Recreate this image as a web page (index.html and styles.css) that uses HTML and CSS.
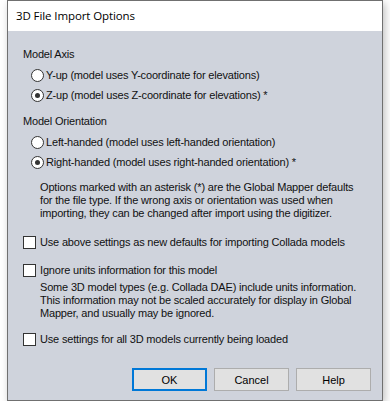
FILE: index.html
```html
<!DOCTYPE html>
<html>
<head>
    <meta charset="utf-8">
    <title>3D File Import Options</title>
    <link rel="stylesheet" href="styles.css">
</head>
<body>
    <div class="dialog">
        <div class="titlebar">3D File Import Options</div>

        <div class="content">
            <div class="group-label">Model Axis</div>
            <label class="radio-row first">
                <span class="radio"></span>
                <span>Y-up (model uses Y-coordinate for elevations)</span>
            </label>
            <label class="radio-row">
                <span class="radio checked"></span>
                <span>Z-up (model uses Z-coordinate for elevations) *</span>
            </label>

            <div class="group-label second">Model Orientation</div>
            <label class="radio-row first">
                <span class="radio"></span>
                <span>Left-handed (model uses left-handed orientation)</span>
            </label>
            <label class="radio-row">
                <span class="radio checked"></span>
                <span>Right-handed (model uses right-handed orientation) *</span>
            </label>

            <p class="note note-axis">
                Options marked with an asterisk (*) are the Global Mapper defaults<br>
                for the file type. If the wrong axis or orientation was used when<br>
                importing, they can be changed after import using the digitizer.
            </p>

            <label class="check-row defaults">
                <span class="check"></span>
                <span>Use above settings as new defaults for importing Collada models</span>
            </label>

            <label class="check-row units">
                <span class="check"></span>
                <span>Ignore units information for this model</span>
            </label>

            <p class="note note-units">
                Some 3D model types (e.g. Collada DAE) include units information.<br>
                This information may not be scaled accurately for display in Global<br>
                Mapper, and usually may be ignored.
            </p>

            <label class="check-row all">
                <span class="check"></span>
                <span>Use settings for all 3D models currently being loaded</span>
            </label>

            <div class="buttons">
                <button class="btn default">OK</button>
                <button class="btn">Cancel</button>
                <button class="btn">Help</button>
            </div>
        </div>
    </div>
</body>
</html>
```

FILE: styles.css
```css
body {
    margin: 0;
    background: #ffffff;
    font-family: 'Liberation Sans', Arial, sans-serif;
    font-size: 11px;
    letter-spacing: -0.18px;
    color: #111;
}

.dialog {
    margin-left: 7px;
    width: 374px;
    height: 399px;
    border: 1px solid #707070;
    background: #cfd3dc;
    box-shadow: 2px 3px 8px rgba(0, 0, 0, 0.25);
}

.titlebar {
    height: 30px;
    line-height: 30px;
    background: #ffffff;
    padding-left: 8px;
    font-family: 'Open Sans', 'Noto Sans', sans-serif;
    font-size: 11.5px;
    letter-spacing: -0.1px;
    color: #000;
}

.content {
    padding: 15px 11px 0 15px;
}

.group-label {
    line-height: 16px;
}

.group-label.second {
    margin-top: 8px;
}

.radio-row,
.check-row {
    display: flex;
    align-items: center;
    height: 20px;
}

.radio-row {
    padding-left: 8px;
}

.radio-row.first {
    margin-top: 3px;
}

.radio {
    position: relative;
    width: 11px;
    height: 11px;
    border: 1px solid #333;
    border-radius: 50%;
    background: #fff;
    margin-right: 2px;
}

.radio.checked::after {
    content: "";
    position: absolute;
    left: 3px;
    top: 3px;
    width: 5px;
    height: 5px;
    border-radius: 50%;
    background: #333;
}

.check {
    width: 11px;
    height: 11px;
    border: 1px solid #333;
    background: #fff;
    margin-right: 4px;
}

.note {
    margin: 9px 0 0 17px;
    line-height: 13px;
}

.note-units {
    margin-top: 1px;
}

.check-row.defaults {
    margin-top: 12px;
}

.check-row.units {
    margin-top: 8px;
}

.check-row.all {
    margin-top: 9px;
}

.buttons {
    display: flex;
    justify-content: flex-end;
    gap: 7px;
    margin-top: 19px;
}

.btn {
    width: 75px;
    height: 23px;
    border: 1px solid #adadad;
    background: #e1e1e1;
    font-family: 'Liberation Sans', Arial, sans-serif;
    font-size: 11px;
    color: #000;
    padding: 0;
}

.btn.default {
    border: 2px solid #0078d7;
}
```
